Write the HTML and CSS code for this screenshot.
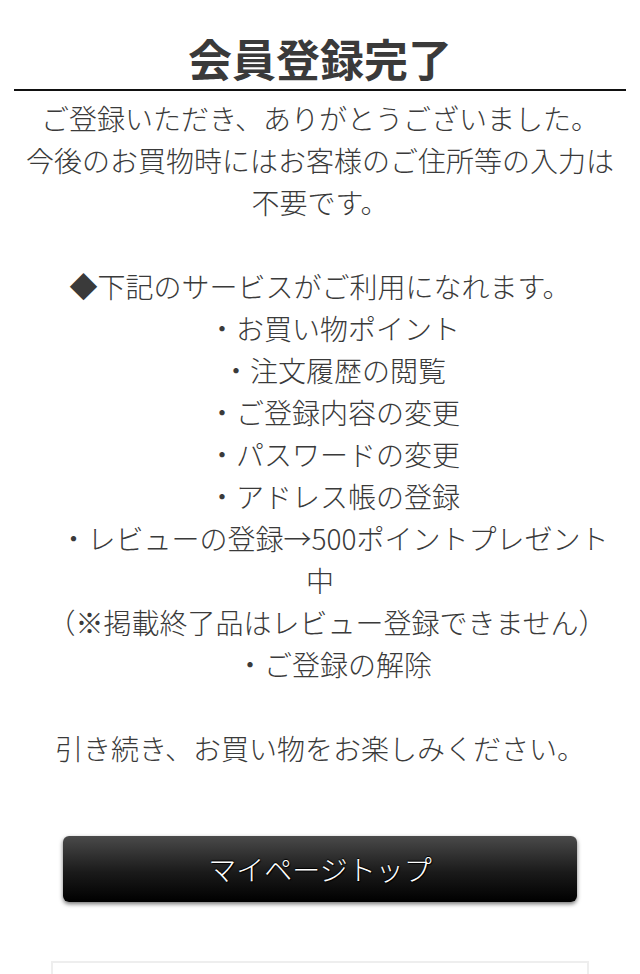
FILE: index.html
```html
<!DOCTYPE html>
<html lang="ja">
<head>
<meta charset="utf-8">
<title>会員登録完了</title>
<link rel="stylesheet" href="styles.css">
</head>
<body>
<div class="page">
  <h1 class="title">会員登録完了</h1>
  <div class="content">
    <p class="msg">ご登録いただき、ありがとうございました。<br>今後のお買物時にはお客様のご住所等の入力は不要です。</p>
    <p class="msg">◆下記のサービスがご利用になれます。<br>　・お買い物ポイント<br>　・注文履歴の閲覧<br>　・ご登録内容の変更<br>　・パスワードの変更<br>　・アドレス帳の登録<br>　・レビューの登録→500ポイントプレゼント中<br>　（※掲載終了品はレビュー登録できません）<br>　・ご登録の解除</p>
    <p class="msg">引き続き、お買い物をお楽しみください。</p>
  </div>
  <div class="actions">
    <a class="btn" href="#">マイページトップ</a>
  </div>
  <div class="panel"></div>
</div>
</body>
</html>
```
FILE: styles.css
```css
html, body {
  margin: 0;
  padding: 0;
  background: #fff;
}
body {
  font-family: "Noto Sans CJK JP", "Noto Sans", sans-serif;
  color: #3a3a3a;
}
.page {
  padding: 0 14px;
}
.title {
  margin: 0;
  padding-top: 27px;
  font-size: 44px;
  line-height: 62px;
  font-weight: 700;
  text-align: center;
  color: #3a3a3a;
  border-bottom: 2px solid #111;
}
.content {
  padding: 6px 6px 0;
  display: flex;
  flex-direction: column;
  gap: 42px;
}
.msg {
  margin: 0;
  font-size: 28px;
  line-height: 42px;
  font-weight: 300;
  text-align: center;
}
.actions {
  display: flex;
  justify-content: center;
  padding-top: 67px;
}
.btn {
  display: flex;
  align-items: center;
  justify-content: center;
  width: 514px;
  height: 66px;
  border-radius: 6px;
  background: linear-gradient(#4a4a4a, #1a1a1a 55%, #000);
  box-shadow: 0 2px 4px rgba(0, 0, 0, 0.55);
  color: #fff;
  font-size: 28px;
  font-weight: 300;
  text-decoration: none;
  text-shadow: 0 -1px 1px #000, 1px 1px 1px #000;
}
.panel {
  margin: 59px 37px 0 37px;
  height: 40px;
  border: 2px solid #eeeeee;
  border-bottom: 0;
}
```
